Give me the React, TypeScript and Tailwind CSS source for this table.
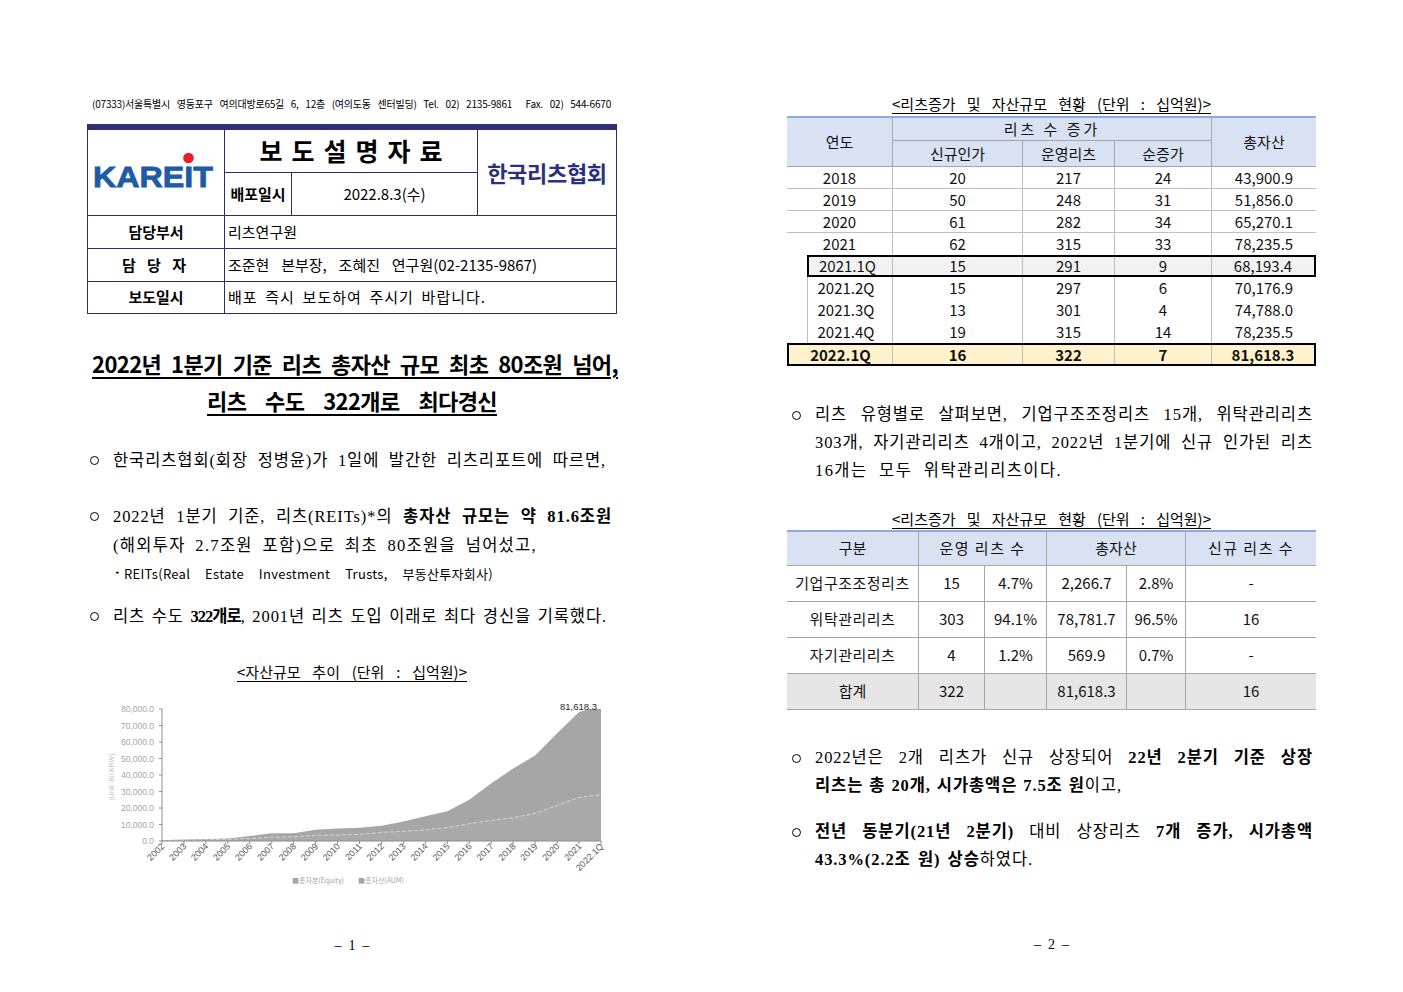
import React from "react";

const SERIF = "font-['Liberation_Serif','Noto_Sans_CJK_KR',serif]";
const SANS = "font-['Noto_Sans_CJK_KR','Liberation_Sans',sans-serif]";

// 자산규모 추이 데이터 (십억원)
const YEARS = [
  "2002", "2003", "2004", "2005", "2006", "2007", "2008", "2009", "2010", "2011",
  "2012", "2013", "2014", "2015", "2016", "2017", "2018", "2019", "2020", "2021", "2022.1Q",
];
const AUM = [
  500, 900, 1200, 1500, 3000, 4700, 4700, 6800, 7500, 8000, 9200, 11800, 15000, 18000,
  25000, 35000, 43900.9, 51856, 65270.1, 78235.5, 81618.3,
];
const EQUITY = [
  300, 500, 700, 1000, 1500, 2300, 2500, 3500, 3600, 4000, 5300, 5800, 6800, 8200, 10500,
  12500, 14200, 16800, 21500, 26500, 28000,
];

const X0 = 62;
const STEP = 21.95;
const Y0 = 150;
const SCALE = 132 / 80000;
const xAt = (i: number) => X0 + i * STEP;
const yAt = (v: number) => Y0 - v * SCALE;

const linePath = (vals: number[]) =>
  vals.map((v, i) => `${i === 0 ? "M" : "L"}${xAt(i).toFixed(1)},${yAt(v).toFixed(1)}`).join(" ");
const areaPath = (vals: number[]) =>
  `M${xAt(0)},${Y0} ` +
  vals.map((v, i) => `L${xAt(i).toFixed(1)},${yAt(v).toFixed(1)}`).join(" ") +
  ` L${xAt(vals.length - 1).toFixed(1)},${Y0} Z`;

function AssetChart() {
  const ticks = [0, 10000, 20000, 30000, 40000, 50000, 60000, 70000, 80000];
  return (
    <svg width="520" height="200" viewBox="0 0 520 200" className="block">
      <defs>
        <clipPath id="plotArea">
          <rect x={X0} y={Y0 - 132} width={STEP * 20} height={132} />
        </clipPath>
      </defs>
      <g clipPath="url(#plotArea)">
        <path d={areaPath(AUM)} fill="#a6a6a6" />
        <path d={areaPath(EQUITY)} fill="#aaaaaa" />
        <path d={linePath(EQUITY)} fill="none" stroke="#d6d6d6" strokeWidth="1" strokeDasharray="4 2" />
      </g>

      {/* y축 */}
      <line x1={X0} y1={Y0 - 132} x2={X0} y2={Y0} stroke="#8c8c8c" strokeWidth="1" />
      {ticks.map((v) => (
        <g key={v}>
          <line x1={X0 - 3} y1={yAt(v)} x2={X0} y2={yAt(v)} stroke="#8c8c8c" strokeWidth="1" />
          <text
            x={X0 - 8}
            y={yAt(v) + 3}
            textAnchor="end"
            fontSize="8.5"
            fill="#a6a6a6"
            fontFamily="Liberation Sans, sans-serif"
          >
            {v.toLocaleString("en-US", { minimumFractionDigits: 1 })}
          </text>
        </g>
      ))}
      <text
        transform="translate(14,86) rotate(-90)"
        textAnchor="middle"
        fontSize="7"
        fill="#bfbfbf"
        fontFamily="Liberation Sans, sans-serif"
      >
        (Unit: Bil KRW)
      </text>

      {/* x축 */}
      <line x1={X0} y1={Y0} x2={xAt(20)} y2={Y0} stroke="#8c8c8c" strokeWidth="1" />
      {YEARS.map((y, i) => (
        <g key={y}>
          <line x1={xAt(i)} y1={Y0} x2={xAt(i)} y2={Y0 + 3} stroke="#8c8c8c" strokeWidth="1" />
          <text
            transform={`translate(${(xAt(i) + 3).toFixed(1)},${Y0 + 6}) rotate(-45)`}
            textAnchor="end"
            fontSize="9"
            fill="#595959"
            fontFamily="Liberation Sans, sans-serif"
          >
            {y}
          </text>
        </g>
      ))}

      <text x={497} y={19} textAnchor="end" fontSize="9.5" fill="#262626" fontFamily="Liberation Sans, sans-serif">
        81,618.3
      </text>

      {/* 범례 */}
      <text x={192} y={192} fontSize="7" fill="#a6a6a6" fontFamily="Noto Sans CJK KR, sans-serif">
        ■총자본(Equity)
      </text>
      <text x={258} y={192} fontSize="7" fill="#a6a6a6" fontFamily="Noto Sans CJK KR, sans-serif">
        ■총자산(AUM)
      </text>
    </svg>
  );
}

function KareitLogo() {
  return (
    <svg width="136" height="84" viewBox="0 0 136 84" className="block">
      <text
        x="5"
        y="56"
        fontSize="30"
        fontWeight="bold"
        fill="#1d5aa8"
        fontFamily="Liberation Sans, sans-serif"
        textLength="120"
        lengthAdjust="spacingAndGlyphs"
        stroke="#1d5aa8"
        strokeWidth="0.8"
      >
        KAREIT
      </text>
      <circle cx="100.5" cy="27" r="5.3" fill="#e8202a" />
    </svg>
  );
}

function HeaderTable() {
  return (
    <div className={`${SANS} w-[530px] text-black`}>
      <div className="h-[6px] bg-[#2e3178]" />
      <div className="border-x border-b border-[#2a2f6c]">
        <div className="flex h-[85px]">
          <div className="w-[137px] border-r border-[#2a2f6c] flex items-center">
            <KareitLogo />
          </div>
          <div className="w-[252px] flex flex-col">
            <div className="h-[43px] border-b border-[#2a2f6c] flex items-center justify-center">
              <span className="text-[25px] font-bold tracking-[9px] mr-[-9px]">보도설명자료</span>
            </div>
            <div className="flex-1 flex">
              <div className="w-[67px] border-r border-[#2a2f6c] flex items-center justify-center text-[15px] font-bold">
                배포일시
              </div>
              <div className="flex-1 flex items-center justify-center text-[15px]">2022.8.3(수)</div>
            </div>
          </div>
          <div className="flex-1 border-l border-[#2a2f6c] flex items-center justify-center text-[22px] font-bold text-[#2b2f80] tracking-[-0.3px]">
            한국리츠협회
          </div>
        </div>
        <div className="flex h-[33px] border-t border-[#2a2f6c] text-[15px]">
          <div className="w-[137px] border-r border-[#2a2f6c] flex items-center justify-center font-bold">담당부서</div>
          <div className="flex items-center pl-[3px]">리츠연구원</div>
        </div>
        <div className="flex h-[33px] border-t border-[#2a2f6c] text-[15px]">
          <div className="w-[137px] border-r border-[#2a2f6c] flex items-center justify-center font-bold tracking-[4px]">
            담 당 자
          </div>
          <div className="flex items-center pl-[3px]">
            <div className="w-[309px] text-justify [text-align-last:justify]">조준현 본부장, 조혜진 연구원(02-2135-9867)</div>
          </div>
        </div>
        <div className="flex h-[32px] border-t border-[#2a2f6c] text-[15px]">
          <div className="w-[137px] border-r border-[#2a2f6c] flex items-center justify-center font-bold">보도일시</div>
          <div className="flex items-center pl-[3px]">
            <div className="w-[258px] text-justify [text-align-last:justify] tracking-[1px]">배포 즉시 보도하여 주시기 바랍니다.</div>
          </div>
        </div>
      </div>
    </div>
  );
}

function Circle() {
  return <span className="inline-block w-[9px] h-[9px] rounded-full border border-black" />;
}

function StatusTable() {
  const cell = "flex items-center justify-center border-r border-[#bfbfbf]";
  const last = "flex items-center justify-center";
  const years = [
    ["2018", "20", "217", "24", "43,900.9"],
    ["2019", "50", "248", "31", "51,856.0"],
    ["2020", "61", "282", "34", "65,270.1"],
    ["2021", "62", "315", "33", "78,235.5"],
  ];
  const quarters = [
    ["2021.2Q", "15", "297", "6", "70,176.9"],
    ["2021.3Q", "13", "301", "4", "74,788.0"],
    ["2021.4Q", "19", "315", "14", "78,235.5"],
  ];
  return (
    <div className={`${SANS} w-[529px] text-[15px] leading-[18px] text-[#111]`}>
      <div className="grid grid-cols-[106px_130px_92px_97px_104px] grid-rows-[23px_25px] bg-[#d9e2f3] border-t-2 border-b border-t-[#8eaadb] border-b-[#a6a6a6]">
        <div className="row-span-2 flex items-center justify-center border-r border-[#a6a6a6]">연도</div>
        <div className="col-span-3 flex items-center justify-center border-r border-b border-[#a6a6a6] tracking-[3px]">
          리츠 수 증가
        </div>
        <div className="row-span-2 flex items-center justify-center">총자산</div>
        <div className="flex items-center justify-center border-r border-[#a6a6a6]">신규인가</div>
        <div className="flex items-center justify-center border-r border-[#a6a6a6]">운영리츠</div>
        <div className="flex items-center justify-center border-r border-[#a6a6a6]">순증가</div>
      </div>

      {years.map((r, i) => (
        <div
          key={r[0]}
          className={`grid grid-cols-[106px_130px_92px_97px_104px] h-[22px] ${i < 3 ? "border-b border-[#bfbfbf]" : ""}`}
        >
          <div className={cell}>{r[0]}</div>
          <div className={cell}>{r[1]}</div>
          <div className={cell}>{r[2]}</div>
          <div className={cell}>{r[3]}</div>
          <div className={last}>{r[4]}</div>
        </div>
      ))}

      <div className="flex h-[22px]">
        <div className="w-[20px]" />
        <div className="flex-1 grid grid-cols-[84px_130px_92px_97px_102px] border-2 border-black bg-[#f2f2f2]">
          <div className={`${cell} pr-[6px]`}>2021.1Q</div>
          <div className={cell}>15</div>
          <div className={cell}>291</div>
          <div className={cell}>9</div>
          <div className={last}>68,193.4</div>
        </div>
      </div>

      {quarters.map((r) => (
        <div key={r[0]} className="flex h-[22px]">
          <div className="w-[20px]" />
          <div className="flex-1 grid grid-cols-[86px_130px_92px_97px_104px]">
            <div className={`${cell} border-l pr-[8px]`}>{r[0]}</div>
            <div className={cell}>{r[1]}</div>
            <div className={cell}>{r[2]}</div>
            <div className={cell}>{r[3]}</div>
            <div className={last}>{r[4]}</div>
          </div>
        </div>
      ))}

      <div className="grid grid-cols-[104px_130px_92px_97px_102px] h-[23px] border-2 border-black bg-[#fff2cc] font-bold">
        <div className={cell}>2022.1Q</div>
        <div className={cell}>16</div>
        <div className={cell}>322</div>
        <div className={cell}>7</div>
        <div className={last}>81,618.3</div>
      </div>
    </div>
  );
}

function TypeTable() {
  const c = "flex items-center justify-center border-r border-[#a6a6a6]";
  const l = "flex items-center justify-center";
  const rows = [
    ["기업구조조정리츠", "15", "4.7%", "2,266.7", "2.8%", "-"],
    ["위탁관리리츠", "303", "94.1%", "78,781.7", "96.5%", "16"],
    ["자기관리리츠", "4", "1.2%", "569.9", "0.7%", "-"],
  ];
  return (
    <div className={`${SANS} w-[529px] text-[15px] text-[#111]`}>
      <div className="grid grid-cols-[132px_66px_62px_80px_59px_130px] h-[36px] bg-[#d9e2f3] border-t-2 border-b border-t-[#8eaadb] border-b-[#a6a6a6]">
        <div className={c}>구분</div>
        <div className={`${c} col-span-2 tracking-[1.5px]`}>운영 리츠 수</div>
        <div className={`${c} col-span-2`}>총자산</div>
        <div className={`${l} tracking-[1.5px]`}>신규 리츠 수</div>
      </div>
      {rows.map((r) => (
        <div key={r[0]} className="grid grid-cols-[132px_66px_62px_80px_59px_130px] h-[36px] border-b border-[#a6a6a6]">
          <div className={`${c} tracking-[0.5px]`}>{r[0]}</div>
          <div className={c}>{r[1]}</div>
          <div className={c}>{r[2]}</div>
          <div className={c}>{r[3]}</div>
          <div className={c}>{r[4]}</div>
          <div className={l}>{r[5]}</div>
        </div>
      ))}
      <div className="grid grid-cols-[132px_66px_62px_80px_59px_130px] h-[36px] border-b border-[#a6a6a6] bg-[#e7e6e6]">
        <div className={c}>합계</div>
        <div className={c}>322</div>
        <div className={c}></div>
        <div className={c}>81,618.3</div>
        <div className={c}></div>
        <div className={l}>16</div>
      </div>
    </div>
  );
}

export default function App() {
  const jl = "text-justify [text-align-last:justify]";
  return (
    <div className="w-[1403px] h-[992px] bg-white flex overflow-hidden text-black">
      {/* 1 페이지 */}
      <div className="ml-[87px] w-[530px] pt-[97px] shrink-0">
        <div className={`${SANS} text-[10px] leading-[14px] pl-[5px] tracking-[-0.2px]`}>
          <div className={`w-[519px] ${jl}`}>
            (07333)서울특별시 영등포구 여의대방로65길 6, 12층 (여의도동 센터빌딩) Tel. 02) 2135-9861 &nbsp;Fax. 02) 544-6670
          </div>
        </div>

        <div className="mt-[13px]">
          <HeaderTable />
        </div>

        <div className={`${SANS} mt-[31px] text-[22px] leading-[37px] font-bold text-center tracking-[-0.6px]`}>
          <div className={`w-[526px] ml-[5px] ${jl} underline underline-offset-[4px] decoration-[1.5px]`}>
            2022년 1분기 기준 리츠 총자산 규모 최초 80조원 넘어,
          </div>
          <div className="flex justify-center">
            <div className={`w-[290px] ${jl} underline underline-offset-[4px] decoration-[1.5px]`}>
              리츠 수도 322개로 최다경신
            </div>
          </div>
        </div>

        <div className={`${SERIF} text-[16.5px] leading-[29px] tracking-[0.9px]`}>
          <div className="flex mt-[27px]">
            <div className="w-[26px] pl-[3px] h-[29px] flex items-center"><Circle /></div>
            <div className={`w-[493px] ${jl}`}>한국리츠협회(회장 정병윤)가 1일에 발간한 리츠리포트에 따르면,</div>
          </div>

          <div className="flex mt-[27px]">
            <div className="w-[26px] pl-[3px] h-[29px] flex items-center"><Circle /></div>
            <div>
              <div className={`w-[499px] ${jl}`}>
                2022년 1분기 기준, 리츠(REITs)*의 <b>총자산 규모는 약 81.6조원</b>
              </div>
              <div className={`w-[424px] ${jl} tracking-[1.3px]`}>(해외투자 2.7조원 포함)으로 최초 80조원을 넘어섰고,</div>
            </div>
          </div>
          <div className={`${SANS} text-[13px] leading-[28px] pl-[28px] tracking-[0.3px]`}>
            <div className={`w-[378px] ${jl}`}>
              <span className="text-[10px] mr-[4px]">*</span>REITs(Real Estate Investment Trusts, 부동산투자회사)
            </div>
          </div>

          <div className="flex mt-[13px]">
            <div className="w-[26px] pl-[3px] h-[29px] flex items-center"><Circle /></div>
            <div className={`w-[494px] ${jl}`}>
              리츠 수도 <b className="tracking-[-1px]">322개로</b>, 2001년 리츠 도입 이래로 최다 경신을 기록했다.
            </div>
          </div>
        </div>

        <div className={`${SANS} mt-[31px] text-[15px] leading-[20px] flex justify-center`}>
          <div className={`w-[230px] ${jl} underline underline-offset-[3px]`}>&lt;자산규모 추이 (단위 : 십억원)&gt;</div>
        </div>

        <div className="mt-[9px] ml-[13px]">
          <AssetChart />
        </div>

        <div className={`${SERIF} mt-[45px] text-[14px] leading-[20px] text-center`}>–&nbsp; 1 &nbsp;–</div>
      </div>

      {/* 2 페이지 */}
      <div className="ml-[170px] w-[529px] pt-[94px] shrink-0">
        <div className={`${SANS} text-[15px] leading-[20px] flex justify-center`}>
          <div className={`w-[319px] ${jl} underline underline-offset-[3px]`}>
            &lt;리츠증가 및 자산규모 현황 (단위 : 십억원)&gt;
          </div>
        </div>
        <div className="mt-[2px]">
          <StatusTable />
        </div>

        <div className={`${SERIF} text-[16.5px] leading-[28px] tracking-[0.9px]`}>
          <div className="flex mt-[35px]">
            <div className="w-[28px] pl-[5px] h-[28px] flex items-center"><Circle /></div>
            <div>
              <div className={`w-[498px] ${jl}`}>리츠 유형별로 살펴보면, 기업구조조정리츠 15개, 위탁관리리츠</div>
              <div className={`w-[498px] ${jl}`}>303개, 자기관리리츠 4개이고, 2022년 1분기에 신규 인가된 리츠</div>
              <div className={`w-[247px] ${jl} tracking-[1.4px]`}>16개는 모두 위탁관리리츠이다.</div>
            </div>
          </div>
        </div>

        <div className={`${SANS} mt-[24px] text-[15px] leading-[20px] flex justify-center`}>
          <div className={`w-[319px] ${jl} underline underline-offset-[3px]`}>
            &lt;리츠증가 및 자산규모 현황 (단위 : 십억원)&gt;
          </div>
        </div>
        <div className="mt-[1px]">
          <TypeTable />
        </div>

        <div className={`${SERIF} text-[16.5px] leading-[28px] tracking-[0.9px]`}>
          <div className="flex mt-[34px]">
            <div className="w-[28px] pl-[5px] h-[28px] flex items-center"><Circle /></div>
            <div>
              <div className={`w-[498px] ${jl}`}>
                2022년은 2개 리츠가 신규 상장되어 <b>22년 2분기 기준 상장</b>
              </div>
              <div className={`w-[307px] ${jl}`}>
                <b>리츠는 총 20개, 시가총액은 7.5조 원</b>이고,
              </div>
            </div>
          </div>
          <div className="flex mt-[18px]">
            <div className="w-[28px] pl-[5px] h-[28px] flex items-center"><Circle /></div>
            <div>
              <div className={`w-[498px] ${jl}`}>
                <b>전년 동분기(21년 2분기)</b> 대비 상장리츠 <b>7개 증가, 시가총액</b>
              </div>
              <div className={`w-[218px] ${jl}`}>
                <b>43.3%(2.2조 원) 상승</b>하였다.
              </div>
            </div>
          </div>
        </div>

        <div className={`${SERIF} mt-[61px] text-[14px] leading-[20px] text-center`}>–&nbsp; 2 &nbsp;–</div>
      </div>
    </div>
  );
}
